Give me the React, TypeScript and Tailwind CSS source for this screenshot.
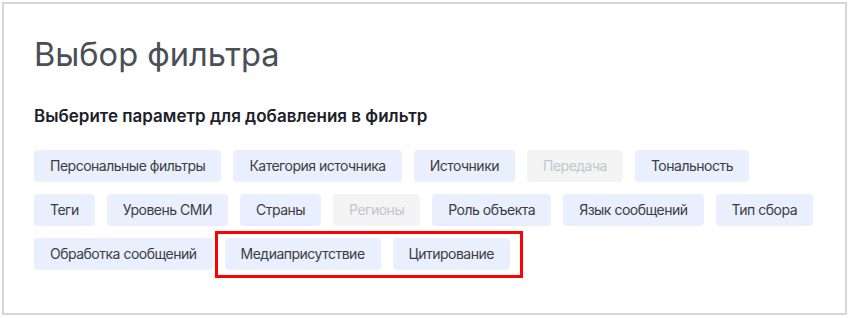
const ROWS: { label: string; disabled?: boolean }[] = [
  { label: 'Персональные фильтры' },
  { label: 'Категория источника' },
  { label: 'Источники' },
  { label: 'Передача', disabled: true },
  { label: 'Тональность' },
  { label: 'Теги' },
  { label: 'Уровень СМИ' },
  { label: 'Страны' },
  { label: 'Регионы', disabled: true },
  { label: 'Роль объекта' },
  { label: 'Язык сообщений' },
  { label: 'Тип сбора' },
  { label: 'Обработка сообщений' },
  { label: 'Медиаприсутствие' },
  { label: 'Цитирование' },
]

function FilterChip({ label, disabled }: { label: string; disabled?: boolean }) {
  return (
    <button
      disabled={disabled}
      className={`h-8 px-4 rounded-[4px] text-[14px] leading-8 tracking-[-0.5px] whitespace-nowrap ${
        disabled ? 'bg-[#f4f4f5] text-[#c3c6cc]' : 'bg-[#e9effc] text-[#3a3d44]'
      }`}
    >
      {label}
    </button>
  )
}

export default function App() {
  return (
    <div className="w-[848px] h-[318px] bg-white p-[2px] font-['Inter','Noto_Sans',sans-serif]">
      <div className="h-[313px] w-[845px] border-2 border-[#d6d6d6] bg-white pl-[30px] pr-6 pt-[30px]">
        {/* заголовок */}
        <h1 className="text-[32.6px] leading-10 font-normal text-[#4a4e57]">Выбор фильтра</h1>

        <p className="mt-[30px] text-[17px] leading-6 font-semibold text-[#1d2129]">
          Выберите параметр для добавления в фильтр
        </p>

        {/* список параметров */}
        <div className="relative mt-[22px] flex flex-wrap gap-3 w-[786px]">
          {ROWS.map((r) => (
            <FilterChip key={r.label} label={r.label} disabled={r.disabled} />
          ))}
          <div className="absolute left-[181px] top-[81px] w-[308px] h-[47px] border-[3px] border-[#ff0000] pointer-events-none" />
        </div>
      </div>
    </div>
  )
}
